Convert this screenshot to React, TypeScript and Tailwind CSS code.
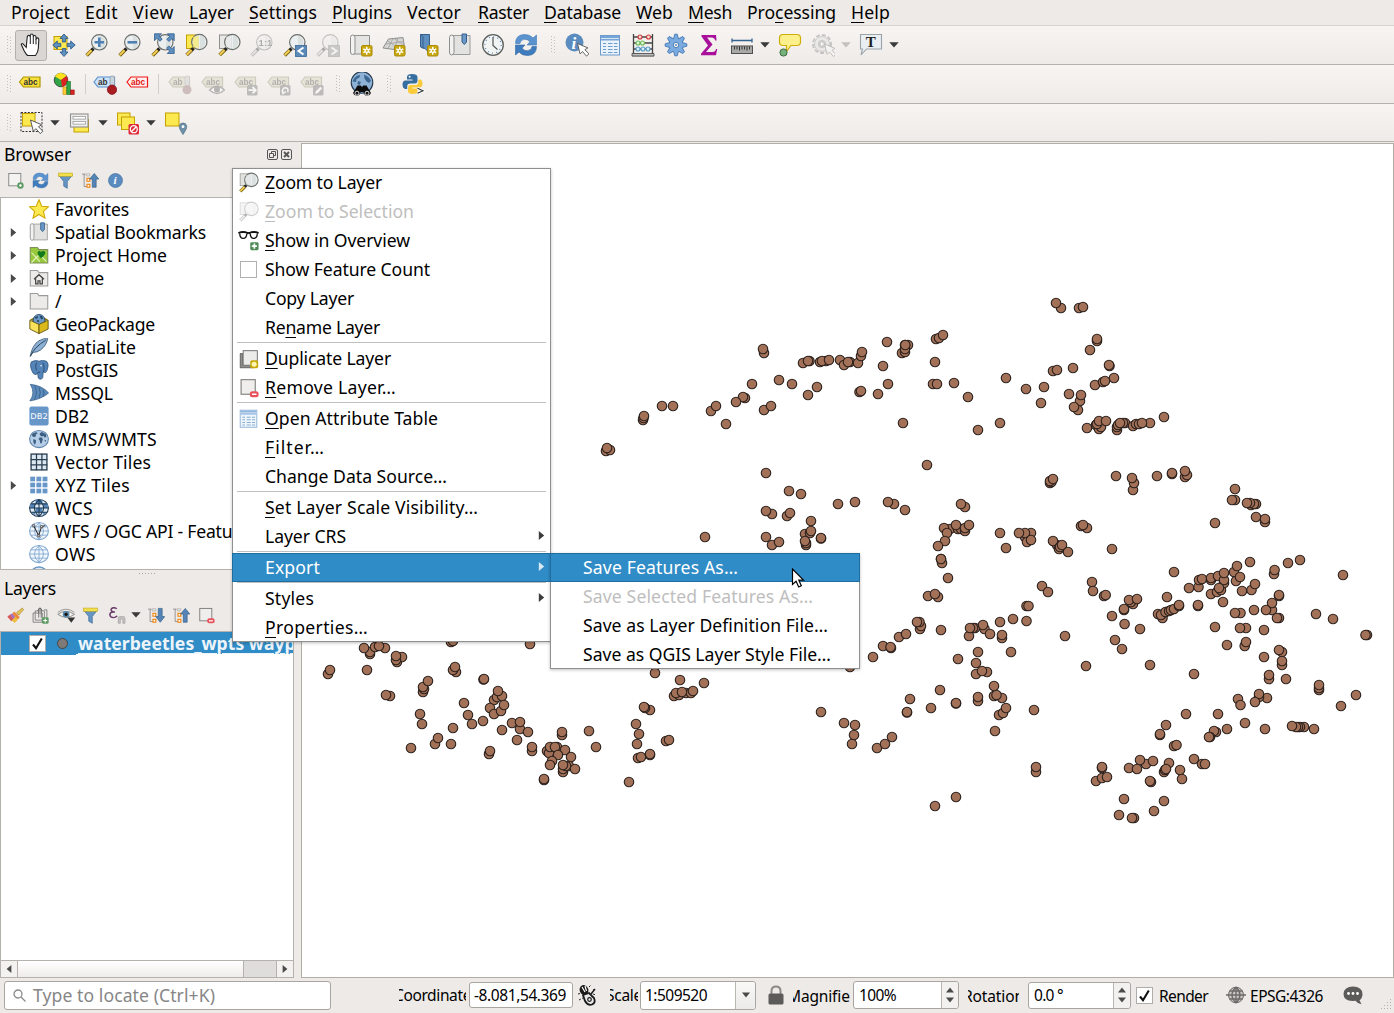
import React, { useLayoutEffect, useRef, useState } from "react";

/* ---------- text ---------- */

// Single line of text, tracked so that it fills exactly `w` pixels.
// An ampersand marks the mnemonic letter that follows it.
function Label({ text, w, className = "" }: { text: string; w: number; className?: string }) {
  const ref = useRef<HTMLSpanElement>(null);
  const [tracking, setTracking] = useState(0);
  const at = text.indexOf("&");
  const plain = text.replace("&", "");
  useLayoutEffect(() => {
    const el = ref.current;
    if (!el) return;
    el.style.letterSpacing = "0px";
    setTracking((w - el.getBoundingClientRect().width) / plain.length);
  }, [w, plain]);
  return (
    <span ref={ref} className={"inline-block shrink-0 whitespace-pre " + className} style={{ letterSpacing: `${tracking}px` }}>
      {at < 0 ? (
        plain
      ) : (
        <>
          {plain.slice(0, at)}
          <span className="underline decoration-1 underline-offset-[3px] [text-decoration-skip-ink:none]">{plain[at]}</span>
          {plain.slice(at + 1)}
        </>
      )}
    </span>
  );
}

/* ---------- icons ---------- */

type Kids = { children?: React.ReactNode };

const I = ({ children, s = 24, dim = false }: Kids & { s?: number; dim?: boolean }) => (
  <svg width={s} height={s} viewBox="0 0 24 24" fill="none" className={dim ? "shrink-0 opacity-35 grayscale" : "shrink-0"}>
    {children}
  </svg>
);

const Lens = () => (
  <>
    <path d="M8.5 15.5 L6.5 17.5" stroke="#222" strokeWidth="3.4" />
    <path d="M6.8 17.2 L1.6 22.4" stroke="#7a6312" strokeWidth="3.6" />
    <path d="M6.5 17.3 L1.7 22.1" stroke="#f3cf55" strokeWidth="2" />
    <circle cx="14.3" cy="9.3" r="7.7" fill="#e9eeee" fillOpacity=".85" stroke="#6c706c" strokeWidth="1.2" />
    <path d="M15 2.5 A7 7 0 0 1 15 16 Z" fill="#cfd5d3" fillOpacity=".6" />
  </>
);

const Star = ({ x = 12, y = 12 }: { x?: number; y?: number }) => (
  <g transform={`translate(${x} ${y})`}>
    <rect x=".5" y=".5" width="10.5" height="10.5" rx="1.5" fill="#c9a80e" stroke="#a98b08" />
    <path d="M5.75 1.8v7.9M2.3 3.8l6.9 3.9M9.2 3.8L2.3 7.7" stroke="#fff" strokeWidth="1.4" />
    <circle cx="5.75" cy="5.75" r="2.2" fill="#fff" />
    <circle cx="5.75" cy="5.75" r="1" fill="#c9a80e" />
  </g>
);

const Cursor = ({ t = "translate(0 0)" }: { t?: string }) => (
  <path transform={t} d="M0 0 L2.6 10.4 L5 8 L9 12.6 L11.4 10.4 L7.4 6.2 L10.4 4.4 Z" fill="#fff" stroke="#555" strokeWidth=".9" />
);

const Hand = () => (
  <I>
    <path d="M7.200 14.500 L4.300 11.200 Q2.700 9.800 2.300 11.500 Q3.500 14 5 17.500 Q6.500 20.500 8.500 22.500 H16.500 Q19 19.500 19.300 15.500 L19.800 6.500 Q19.700 4.900 18.500 4.900 T17 6.500 V4 Q16.900 2.500 15.700 2.500 T14.300 4 V2.700 Q14 1 12.700 1 T11.300 2.700 V4 Q11 2.400 9.800 2.400 T8.200 4 Z" fill="#fff" stroke="#222" strokeWidth="1.100" />
    <path d="M11.300 4V11M14.300 4V11M17 6V11.500" stroke="#222" strokeWidth="1" />
  </I>
);

const Pan = () => (
  <I>
    <rect x="2" y="3.5" width="13" height="13" fill="#fce94f" stroke="#c4a000" />
    <g fill="#5f8fbf" stroke="#2f5c8b" strokeWidth=".9">
      <path d="M12 1l4 4.500h-2.400v3.500h-3.200V5.500H8z" />
      <path d="M12 23.500l4-4.500h-2.400v-3.500h-3.200v3.500H8z" />
      <path d="M.8 12l4.500-4v2.400h3.500v3.200H5.300V16z" />
      <path d="M23.200 12l-4.500-4v2.400h-3.500v3.200h3.500V16z" />
    </g>
  </I>
);

const ZoomIn = () => (
  <I>
    <Lens />
    <path d="M14.300 4.500v9.600M9.500 9.300h9.600" stroke="#4f80b4" strokeWidth="2.600" />
  </I>
);
const ZoomOut = () => (
  <I>
    <Lens />
    <path d="M9.500 9.300h9.600" stroke="#4f80b4" strokeWidth="2.600" />
  </I>
);
const ZoomFull = () => (
  <I>
    <Lens />
    <g fill="#5f8fbf" stroke="#2f5c8b" strokeWidth=".8">
      <path d="M3.500.800h7L8.200 3l3 3L9 8.200l-3-3-2.500 2.500z" />
      <path d="M23.200.800v7L21 5.500l-3 3-2.200-2.200 3-3L16.300.800z" />
      <path d="M23.200 20.500h-7l2.400-2.400-3-3 2.200-2.200 3 3 2.400-2.400z" />
    </g>
  </I>
);
const ZoomSel = ({ fill = "#fce94f", stroke = "#c4a000", s = 24, dim = false }: { fill?: string; stroke?: string; s?: number; dim?: boolean }) => (
  <I s={s} dim={dim}>
    <rect x="2.500" y="2" width="12" height="13.500" fill={fill} stroke={stroke} />
    <g transform="translate(1 -.300)">
      <Lens />
    </g>
    <rect x="9" y="3.500" width="5.500" height="11" fill={fill} fillOpacity=".55" />
  </I>
);
const ZoomNative = () => (
  <I dim>
    <Lens />
    <text x="8.600" y="13" fontSize="9.500" fontWeight="bold" fill="#333" fontFamily="Liberation Sans">1:1</text>
  </I>
);
const ZoomStep = ({ next = false }: { next?: boolean }) => (
  <I dim={next}>
    <Lens />
    <rect x="12.500" y="12.500" width="11" height="11" fill="#5b8ab8" stroke="#3a6897" strokeWidth=".8" />
    <path d={next ? "M15.500 14.500l5 3.500-5 3.500" : "M20.500 14.500l-5 3.500 5 3.500"} stroke="#fff" strokeWidth="2" />
  </I>
);

const NewMap = () => (
  <I>
    <path d="M5 2.500h15.500v18.500H5z" fill="#e4e4e2" stroke="#8e8e8c" />
    <path d="M1.500 19V4.500Q1.500 2 3.700 2T6 4.500V19.500Q5.500 21.500 3.500 21.500T1.500 19z" fill="#f2f2f0" stroke="#8e8e8c" />
    <Star x={12} y={12} />
  </I>
);
const New3D = () => (
  <I>
    <path d="M6.500 6L21 4.500 22.500 14 16 17 1 15z" fill="#d5d5d3" stroke="#8e8e8c" />
    <path d="M11 5.500L6 15.500M16 5L12 16.500M4 11l18-2.500M12 5.500L22 12M6 8l11 8" stroke="#a0a09e" strokeWidth=".8" />
    <Star x={12} y={12} />
  </I>
);
const NewBookmark = () => (
  <I>
    <path d="M5.500 1.500h9V20l-4.500-4.500L5.500 14z" fill="#5f8fbf" stroke="#355f8c" />
    <path d="M5.500 1.500l2.500 2V16" stroke="#355f8c" />
    <Star x={12} y={12} />
  </I>
);
const Bookmarks = ({ s = 24 }: { s?: number }) => (
  <I s={s}>
    <path d="M5 2.500h17V21.500H5z" fill="#e2e2e0" stroke="#9a9a98" />
    <path d="M1.500 19V4.500Q1.500 2 3.700 2T6 4.500V19.500Q5.500 22 3.500 22T1.500 19z" fill="#f2f2f0" stroke="#8e8e8c" />
    <path d="M14 1h4.500v8l-2.200 2.500L14 9z" fill="#6a98c6" stroke="#345f8c" />
  </I>
);
const Clock = () => (
  <I>
    <circle cx="12" cy="12" r="10.300" fill="#f2f4f4" stroke="#5c5f5c" strokeWidth="1.300" />
    <circle cx="12" cy="12" r="8.200" stroke="#5f8fbf" strokeWidth="1.300" strokeDasharray="1 3.290" />
    <path d="M12 4v8.500l4.500 4" stroke="#555" strokeWidth="1.200" />
  </I>
);
const Refresh = ({ s = 24 }: { s?: number }) => (
  <I s={s}>
    <path d="M1.500 10.500Q1.500 2 10 1.500q6-.200 9 3.500l3.500-3v10H13l3-3.200Q13.500 6 10.500 6.300 6.500 6.500 6 10.500z" fill="#5b93cf" stroke="#3f78b4" strokeWidth=".6" />
    <path d="M22.500 13.500q0 8.500-8.500 9-6 .200-9-3.500l-3.500 3V12H11l-3 3.200q2.500 2.800 5.500 2.500 4-.200 4.500-4.200z" fill="#3f7cbe" stroke="#2f66a0" strokeWidth=".6" />
  </I>
);
const Info = ({ s = 24, cursor = false }: { s?: number; cursor?: boolean }) => (
  <I s={s}>
    {cursor ? (
      <>
        <circle cx="9.500" cy="9.500" r="9" fill="#5b8cc0" />
        <text x="6.600" y="15.500" fontSize="17" fontStyle="italic" fontWeight="bold" fill="#fff" fontFamily="Liberation Serif">i</text>
        <Cursor t="translate(12.500 10.500)" />
      </>
    ) : (
      <>
        <circle cx="12" cy="12" r="9.800" fill="#5b8cc0" stroke="#3f70a4" />
        <text x="9" y="17.500" fontSize="16" fontStyle="italic" fontWeight="bold" fill="#fff" fontFamily="Liberation Serif">i</text>
      </>
    )}
  </I>
);
const Table = ({ s = 24, dim = false }: { s?: number; dim?: boolean }) => (
  <I s={s}>
    <g opacity={dim ? 0.8 : 1}>
      <rect x="2.500" y="2.500" width="19" height="19.500" fill="#eaf3fb" stroke="#6d9bcb" />
      <rect x="3" y="3" width="18" height="4.500" fill="#76a5d8" />
      <path d="M3 5.500h18" stroke="#fff" strokeWidth=".7" />
      <path d="M5 10.500h3M10 10.500h4.500M16 10.500h3.500M5 13.500h3M10 13.500h4.500M16 13.500h3.500M5 16.500h3M10 16.500h4.500M16 16.500h3.500M5 19.500h3M10 19.500h4.500M16 19.500h3.500" stroke="#6d9bcb" strokeWidth="1.200" />
    </g>
  </I>
);
const Abacus = () => (
  <I>
    <path d="M2.500 1v21M21.500 1v21M1 22.500h22M2.500 4h19M2.500 10h19M2.500 16h19" stroke="#444" strokeWidth="1.300" />
    <path d="M1 20.500h22v2.500H1z" fill="#bbb" stroke="#444" strokeWidth=".8" />
    <g strokeWidth="1.100">
      <g fill="#fbdada" stroke="#cc3a3a"><circle cx="9" cy="4" r="2" /><circle cx="17.500" cy="4" r="2" /></g>
      <g fill="#dff5d8" stroke="#6dbb58"><circle cx="7" cy="10" r="2" /><circle cx="11.500" cy="10" r="2" /></g>
      <g fill="#d9eefb" stroke="#5a9cc8"><circle cx="7" cy="16" r="2" /><circle cx="12" cy="16" r="2" /><circle cx="17" cy="16" r="2" /></g>
    </g>
  </I>
);
const Gear = () => (
  <I>
    {[0, 45, 90, 135].map((a) => (
      <path key={a} d="M10.800 1.200h2.400l1.400 5v11.600l-1.400 5h-2.400l-1.400-5V6.200z" fill="#7aaade" stroke="#3f78b4" strokeWidth=".9" transform={`rotate(${a} 12 12)`} />
    ))}
    <circle cx="12" cy="12" r="6.600" fill="#7aaade" />
    <circle cx="12" cy="12" r="2.700" fill="#f3f0ee" stroke="#3f78b4" strokeWidth=".9" />
    <circle cx="12" cy="12" r=".9" fill="#4a80ba" />
  </I>
);
const Sigma = () => (
  <I>
    <path d="M4.500 2h14.500l.500 5.500h-1.300Q17.500 4.500 14.500 4.500H10l5.500 7-6.500 7.500h6.500q3 0 3.500-3h1.200L19 22.300H4v-1.500l7-8.300L4.500 3.500z" fill="#a8109c" />
  </I>
);
const Ruler = () => (
  <I>
    <path d="M2 7.500h20M2 5.500v4M22 5.500v4" stroke="#34638f" strokeWidth="1.300" />
    <rect x="1.500" y="13" width="21" height="7.500" fill="#a9a9a7" stroke="#505050" />
    <path d="M4.500 13.500v3M7 13.500v3M9.500 13.500v4M12 13.500v3M14.500 13.500v3M17 13.500v4M19.500 13.500v3" stroke="#333" />
  </I>
);
const MapTip = () => (
  <I>
    <path d="M5 1.500h14q3.500 0 3.500 3.500v4q0 3.500-3.500 3.500h-6l-4.500 6V12.500H5Q1.500 12.500 1.500 9V5Q1.500 1.500 5 1.500z" fill="#fbf08c" stroke="#d0ae0a" strokeWidth="1.200" />
    <circle cx="5.500" cy="19.500" r="3.600" fill="#76b07a" stroke="#3d6b41" />
  </I>
);
const Action = () => (
  <I dim>
    <circle cx="11" cy="11" r="9" stroke="#777" strokeWidth="2" strokeDasharray="4 2" />
    <circle cx="11" cy="11" r="7.500" fill="#ddd" stroke="#888" />
    <circle cx="11" cy="11" r="4" fill="#888" />
    <path d="M9.800 8.800v4.400l3.500-2.200z" fill="#fff" />
    <Cursor t="translate(13.500 11)" />
  </I>
);
const Annot = () => (
  <I>
    <path d="M1.500 1.500h21v14.500H7.500L2 22l1.500-6h-2z" fill="#e9eef2" stroke="#9aa3aa" strokeWidth="1.100" />
    <text x="6.800" y="13.500" fontSize="15" fill="#222" fontFamily="Liberation Serif" fontWeight="bold">T</text>
  </I>
);

const tagPath = "M1 7.500L5 2.500h16.500v10H5z";
const Tag = ({ fill, stroke, text, t = "abc" }: { fill: string; stroke: string; text: string; t?: string }) => (
  <>
    <path d={tagPath} fill={fill} stroke={stroke} strokeWidth="1.200" />
    <text x="5" y="10.300" fontSize="8.200" fontWeight="bold" fill={text} fontFamily="Liberation Sans">{t}</text>
  </>
);
const LabelIcon = () => (
  <I>
    <g transform="translate(.500 2.500)"><Tag fill="#f7e03a" stroke="#b09300" text="#333" /></g>
  </I>
);
const Diagram = () => (
  <I>
    <circle cx="9" cy="8" r="6.800" fill="#2fa548" stroke="#1c1c1c" strokeWidth=".7" />
    <path d="M9 8L3 4.500A6.800 6.800 0 0 1 14.500 4z" fill="#fce01e" />
    <path d="M9 8L14.500 4A6.800 6.800 0 0 1 10 14.700z" fill="#d22" />
    <rect x="11" y="15" width="3.600" height="7.500" fill="#fc3" stroke="#c80" strokeWidth=".6" />
    <rect x="14.800" y="9.500" width="3.600" height="13" fill="#2fa548" stroke="#176b2b" strokeWidth=".6" />
    <rect x="18.600" y="18" width="3.600" height="4.500" fill="#d22" stroke="#811" strokeWidth=".6" />
  </I>
);
const Pin = () => (
  <I>
    <g transform="translate(0 2.500)"><Tag fill="#cde4fa" stroke="#5590d0" text="#333" t="ab" /></g>
    <rect x="17" y="4" width="4.500" height="10" rx="2" fill="#c8d4de" stroke="#8b96a0" strokeWidth=".7" />
    <circle cx="19" cy="17.700" r="4.700" fill="#a81c22" stroke="#7c1016" strokeWidth=".7" />
  </I>
);
const RedTag = () => (
  <I>
    <g transform="translate(0 2.500)"><Tag fill="#fff0f0" stroke="#f01414" text="#e01414" /></g>
  </I>
);
const GreyTag = ({ kind }: { kind: number }) => (
  <I>
    <g opacity=".42">
      <g transform="translate(0 2.500)"><Tag fill="#d5d3b8" stroke="#9a9880" text="#555" t={kind === 0 ? "ab" : "abc"} /></g>
      {kind === 0 && (
        <>
          <rect x="17" y="4" width="4.500" height="10" rx="2" fill="#ccc" stroke="#999" strokeWidth=".7" />
          <circle cx="19" cy="17.700" r="4.500" fill="#9c7a7c" />
        </>
      )}
      {kind === 1 && (
        <>
          <path d="M8.500 18Q16 10.500 23.500 18 16 25 8.500 18z" fill="#fff" stroke="#666" strokeWidth="1.200" />
          <circle cx="16" cy="17.500" r="3" fill="#666" />
        </>
      )}
      {kind > 1 && <rect x="13" y="13" width="10.500" height="10.500" rx="1.500" fill="#777" />}
      {kind === 2 && <path d="M14.500 18.200h7M18.500 15l3.300 3.200-3.300 3.200" stroke="#fff" strokeWidth="1.800" />}
      {kind === 3 && <path d="M16 21q-1.500-5 2.500-5.200 3.500.500 2.200 4.500M15 18l1 3.500 3-2" stroke="#fff" strokeWidth="1.500" />}
      {kind === 4 && <path d="M15 22l1-3 4.500-4.300 1.600 1.600L18 21z" fill="#fff" />}
    </g>
  </I>
);
const Binoculars = () => (
  <I>
    <circle cx="12" cy="10.500" r="10.800" fill="#8db2d6" stroke="#24394f" strokeWidth="1.100" />
    <path d="M4 6.500q3-4 6-3.500l-.500 2.500-3 1.500-.500 3-3.500-.500zM14 2.800q5 1.500 7 6l-2 2.200-2.500-1.500-2-3zM8 9l3 1-1.500 3-2-1z" fill="#3d6690" />
    <path d="M7.500 13.500h3.200l1.300 1.500 1.300-1.500h3.200l4.500 7.500q-1 2.700-4 2.700T13.500 20h-3q-.5 3.700-3.500 3.700T3 21z" fill="#0c0c0c" />
    <circle cx="7" cy="21.200" r="2" stroke="#ddd" fill="#111" />
    <circle cx="17" cy="21.200" r="2" stroke="#ddd" fill="#111" />
  </I>
);
const Python = () => (
  <I>
    <path d="M11 2Q6 2 6 5v2.500h5.500v1H4Q1.500 9 1.500 12.500T4 17h2.200v-2.800q.200-2.700 3-2.700h5q2.300-.200 2.300-2.500V5Q16.300 2 11 2z" fill="#366f9f" />
    <circle cx="8.600" cy="4.700" r="1" fill="#fff" />
    <path d="M11.800 22q5 0 5-3v-2.500h-5.500v-1H19q2.500-.500 2.500-4T19 7.500h-1.800v2.700q-.200 2.800-3 2.800h-5Q7 13.300 7 15.500V19Q7 22 11.800 22z" fill="#f9cb3a" />
    <path d="M16.500 16.500l5.500 2.300-5.500 2.300" stroke="#fff" strokeWidth="3" />
    <path d="M16.500 16.300l5.500 2.500-5.500 2.500" stroke="#333" strokeWidth="1.100" />
  </I>
);

const SelectIcon = () => (
  <I>
    <rect x="1" y="1.500" width="21" height="19" stroke="#333" strokeWidth="1" strokeDasharray="2 1.400" />
    <rect x="2.500" y="2.500" width="12.500" height="12.500" fill="#fce94f" stroke="#c4a000" />
    <g transform="translate(10.500 9) scale(1.080)"><Cursor /></g>
  </I>
);
const SelectForm = () => (
  <I>
    <rect x="6" y="8.500" width="14.500" height="12.500" fill="#fce94f" stroke="#c4a000" />
    <rect x="2.500" y="3" width="17.500" height="13" fill="#eee" stroke="#8f8f8d" strokeWidth="1.100" />
    <rect x="5" y="5.500" width="12.500" height="2.600" fill="#fff" stroke="#999" strokeWidth=".8" />
    <rect x="5" y="10.500" width="12.500" height="2.600" fill="#fff" stroke="#999" strokeWidth=".8" />
  </I>
);
const Deselect = () => (
  <I>
    <rect x="1.500" y="2" width="12.500" height="12" fill="#fce94f" stroke="#c4a000" />
    <rect x="5.500" y="6" width="13" height="12.500" fill="#fce94f" stroke="#c4a000" />
    <rect x="12.500" y="13" width="10.500" height="10.500" rx="1.500" fill="#e02a38" />
    <circle cx="17.800" cy="18.200" r="3.500" stroke="#fff" strokeWidth="1.300" />
    <path d="M15.300 20.700l5-5" stroke="#fff" strokeWidth="1.300" />
  </I>
);
const SelectLoc = () => (
  <I>
    <rect x="1.500" y="2" width="13.500" height="13" fill="#fce94f" stroke="#c4a000" />
    <path d="M19 23.500Q15 17.500 15.300 15.500 15.500 12 19 12t3.700 3.500Q23 17.500 19 23.500z" fill="#6f92a8" stroke="#4d6d82" strokeWidth=".7" />
    <circle cx="19" cy="15.700" r="1.400" fill="#fff" />
  </I>
);

/* small panel icons */
const AddSq = ({ s = 17 }: { s?: number }) => (
  <I s={s}>
    <rect x="2.500" y="2" width="17" height="17.500" fill="#f4f3f1" stroke="#7c7c7a" strokeWidth="1.200" />
    <circle cx="19" cy="19" r="4.500" fill="#5c9a64" />
    <circle cx="19" cy="19" r="1.700" fill="#fff" />
  </I>
);
const RemoveSq = ({ s = 17 }: { s?: number }) => (
  <I s={s}>
    <rect x="2.500" y="2" width="17" height="17.500" fill="#efeeec" stroke="#7c7c7a" strokeWidth="1.300" />
    <rect x="13" y="16" width="10.500" height="7" rx="3" fill="#e8505a" />
    <path d="M15.500 19.500h5.500" stroke="#fff" strokeWidth="1.800" />
  </I>
);
const Funnel = () => (
  <I s={17}>
    <path d="M2.500 4.500h19l-7 9V23l-5-3v-6.500z" fill="#6695c4" stroke="#3e6c9b" />
    <rect x="2" y="1.500" width="20" height="4.500" fill="#f3e04c" stroke="#c0a41a" strokeWidth=".8" />
  </I>
);
const TreeArrow = ({ down = false }: { down?: boolean }) => (
  <I s={17}>
    <path d="M0 3h5M3 3v17.500M3 20.500h4" stroke="#888" strokeWidth="1.200" />
    <path d="M6 2.500h5v3H6z" stroke="#aaa" />
    <rect x="7" y="9" width="4" height="4" fill="#fff" stroke="#f08a1c" strokeWidth="1.700" />
    <rect x="7" y="17.500" width="4" height="4" fill="#fff" stroke="#f08a1c" strokeWidth="1.700" />
    <path d={down ? "M14.500 2h5.500v11.500h3.700L17.300 21.500l-6.500-8h3.700z" : "M14.500 21.500h5.500V10h3.700L17.300 2l-6.500 8h3.700z"} fill="#5585b8" stroke="#31597f" strokeWidth=".9" />
  </I>
);
const Brush = () => (
  <I s={17}>
    <path d="M23.500 3.500L21.500 1.500 13.500 8l3 3.500z" fill="#e9c75a" stroke="#a5822a" />
    <path d="M10.500 6.500l7.500 8-3 3-8-7.500z" fill="#e88a3c" />
    <path d="M7 9.500l8.500 8L11 22.500 1 14z" fill="#f0bd3e" />
    <path d="M.500 13.500l4-3 4.500 6-3 3.500z" fill="#d65a5a" />
    <path d="M4 11l3.500-2 4 5-2.500 3z" fill="#a870c0" />
  </I>
);
const AddGroup = () => (
  <I s={17}>
    <path d="M1.500 8.500h13v13h-13zM4.500 5.500h13v13h-13z" fill="#eceae8" stroke="#6f6f6d" strokeWidth="1.100" />
    <path d="M9.500 15V2.500h3.500V15M8 5.500L11.200 1l3.300 4.500" stroke="#555" strokeWidth="1.100" />
    <path d="M17 4h4v11" stroke="#6f6f6d" strokeWidth="1.100" />
    <rect x="14" y="14.500" width="9.500" height="9" rx="2" fill="#5c9a64" />
    <path d="M16 19h5.500M18.700 16.300v5.500" stroke="#fff" strokeWidth="1.500" />
  </I>
);
const Eye = () => (
  <I s={19}>
    <path d="M1 10.500Q11 3 22 10.500 12 18 1 10.500z" fill="#f4f4f2" stroke="#888" strokeWidth="1.200" />
    <path d="M1 8Q11 0 22 8" stroke="#999" strokeWidth="1.200" />
    <circle cx="11.500" cy="10.500" r="4.200" fill="#5a86a8" />
    <circle cx="11.500" cy="10.500" r="2" fill="#111" />
    <path d="M13 14.500h10l-5 6.500z" fill="#333" />
  </I>
);
const Epsilon = () => (
  <I s={17}>
    <path d="M11 2.500Q9 .800 6.500 1 3 1.500 3 4t4 3.200h1.500H6Q1 7.500 1.200 11t5 4q3.500 0 5.300-2.500" stroke="#6d3f6d" strokeWidth="2.100" />
    <path d="M13 23v-7q0-2.500 2.500-2.500H21q1.500.500 1.500 2.500v7h-3v-6H16v6z" fill="#c5c3c1" stroke="#999" strokeWidth=".8" />
  </I>
);

/* browser tree icons */
const Fav = () => (
  <I s={20}>
    <path d="M12 .800l3.300 7.800 8.200.700-6.200 5.500 1.900 8.200L12 18.600l-7.200 4.400 1.900-8.200L.500 9.300l8.200-.700z" fill="#fce94f" stroke="#d0a808" strokeWidth="1.300" />
  </I>
);
const folder = "M1.500 21.500V3h8.500l2 2.500h10.500v16z";
const Folder = ({ children }: Kids) => (
  <I s={20}>
    <path d={folder} fill="#ecebe9" stroke="#9b9b99" strokeWidth="1.300" />
    {children}
  </I>
);
const HomeGlyph = () => <path d="M6 13.500l6-5.500 6 5.500M8 12.500v6.500h2.800v-3.500h2.400V19H16v-6.500" stroke="#444" strokeWidth="1.500" />;
const ProjFolder = () => (
  <I s={20}>
    <path d={folder} fill="#98c93c" stroke="#7d8f5a" strokeWidth="1.300" />
    <path d="M3 21L12 12M3 9l10 11M15 14l6 6" stroke="#e6f3c0" strokeWidth="1.300" />
    <path d="M14.500 16Q9.500 12 10.500 8.500q2-2.500 4 0 2.500-2.500 5 0Q20 12 14.500 16z" fill="#137a1c" />
  </I>
);
const GeoPkg = () => (
  <I s={20}>
    <path d="M1 6.500L12 1.500 23 6.500 12 12z" fill="#8a7310" />
    <circle cx="12" cy="7.500" r="7" fill="#6c98c4" stroke="#27486b" />
    <path d="M6.500 4.500l3.500-2 1 1.500-2 2zM12.500 2l3 .500 1.500 3-2 1-1.500-2zM10 7l2.500 1-1 2-2-1z" fill="#27486b" />
    <path d="M1 7.500l11 5V23.500L1 18z" fill="#f7e25a" stroke="#5b4c08" />
    <path d="M23 7.500l-11 5V23.500L23 18z" fill="#d9b91c" stroke="#5b4c08" />
  </I>
);
const Feather = () => (
  <I s={20}>
    <path d="M1.500 23Q4 9 12 4.500 18 1 22.500 2 21 10 14 15.500q-4 3-9 3z" fill="#8db0d3" stroke="#33526f" strokeWidth=".9" />
    <path d="M1.500 23.500Q6 12 20 4" stroke="#2a455f" strokeWidth="1.200" />
  </I>
);
const Elephant = () => (
  <I s={20}>
    <path d="M3 2Q9-.500 12 1.500 16-.500 21 1.500q3 3 1.500 8-1 4-2.500 5.500l-3-.500-.500 6.500q-1 2.500-3.500 2t-2.200-4l-.500-4-1.500 2.500Q5 18 3.500 13 .500 6 3 2z" fill="#5585b8" stroke="#31597f" />
    <path d="M9 3q-2 4 0 9.500M16.500 3.500q3 4 .500 11M10.500 15l3-.500" stroke="#27486b" strokeWidth="1.100" />
    <circle cx="14.500" cy="7" r=".9" fill="#fff" />
  </I>
);
const Mssql = () => (
  <I s={20}>
    <path d="M1.500 1.500Q16 3 23.500 12 15 19.500 1 21.500 8 12 1.500 1.500z" fill="#5b8bbd" stroke="#33577d" strokeWidth=".8" />
    <path d="M7 3.500q4 8-.500 16.500M12 5q3 7 0 13M17 8q2 4.500 0 8" stroke="#33577d" strokeWidth=".9" />
  </I>
);
const Db2 = () => (
  <I s={20}>
    <rect x=".5" y=".5" width="23" height="23" rx="2.500" fill="#6796c8" />
    <text x="1.500" y="15.500" fontSize="9.500" textLength="21" lengthAdjust="spacingAndGlyphs" fill="#fff" fontFamily="DejaVu Sans">DB2</text>
  </I>
);
const Globe = ({ kind }: { kind: "wms" | "wcs" | "wfs" | "ows" }) => (
  <I s={20}>
    <ellipse cx="12" cy="12" rx="11.300" ry="10.300" fill={kind === "wms" ? "#b5cde6" : kind === "wcs" ? "#dfeaf4" : "#f2f7fc"} stroke={kind === "wcs" ? "#1f3a55" : kind === "wms" ? "#6085aa" : "#7ea6d0"} strokeWidth="1.300" />
    {kind === "wms" && <path d="M3 7q3-3.500 6-3l1.500 1.500-2.500 1 .5 2-2.500 1.500L4.500 9zM5.500 12l3 1.500-.5 3.500-1.500 2-1.500-4zM13 5l2.500-1.500L20 6l1 3-2 1.500-1.500-2-2 .5-2.500-1.500zM13 10l3 .5.5 2.500-1.500 4.500-1.500-.5-.5-3-1.500-2zM18.500 13l2 .5-1 2.500z" fill="#3d5f82" />}
    {kind === "wcs" && <path d="M2 7h5v5H1zM8 2h8v5H8zM17 7h5l1 5h-5zM8 12h8v5H8zM3 17h4l1 4zM17 17h4l-4 4z" fill="#5585b8" />}
    {kind !== "wms" && <path d="M1 12h22M3 7h18M3 17h18M12 2v20M12 2Q1 12 12 22M12 2Q23 12 12 22" stroke={kind === "wcs" ? "#1f3a55" : "#7ea6d0"} strokeWidth={kind === "wcs" ? "1.300" : "1"} />}
    {kind === "wfs" && <path d="M5.500 5.500l6 12L15 7l4.500-1.500" stroke="#333" strokeWidth="1.300" />}
    {kind === "wfs" && <path d="M4.500 4.500h2.500V7H4.500zM10.500 16.500h2.500V19h-2.500zM14 5.500h2.500V8H14z" fill="#fff" stroke="#333" strokeWidth=".9" />}
  </I>
);
const VTiles = () => (
  <I s={20}>
    <rect x="2.500" y="2.500" width="19" height="19" fill="#dce8f2" stroke="#2a3e50" strokeWidth="1.600" />
    <path d="M9 2v20M15.500 2v20M2 9h20M2 15.500h20" stroke="#2a3e50" strokeWidth="1.500" />
  </I>
);
const XTiles = () => (
  <I s={20}>
    {[2, 9.200, 16.400].map((y) => [1.500, 8.900, 16.300].map((x) => <rect key={`${x}-${y}`} x={x} y={y} width="5.800" height="5.600" fill="#6796c8" />))}
  </I>
);

/* context-menu icons */
const Glasses = () => (
  <I s={21}>
    <path d="M.500 3.500Q6 1 11 3.500q1-.500 2 0Q18 1 23.500 3.500" stroke="#111" strokeWidth="2.200" />
    <path d="M2 4q0 5.500 4 5.500T10 4M14 4q0 5.500 4 5.500T22 4" fill="#fff" stroke="#111" strokeWidth="1.500" />
    <rect x="14" y="14" width="9.500" height="9" rx="1.500" fill="#4e8a56" />
    <path d="M18.700 15.500v6M15.700 18.500h6" stroke="#fff" strokeWidth="2" />
  </I>
);
const Duplicate = () => (
  <I s={20}>
    <path d="M1.500 5.500h3v14h13v3h-16z" fill="#8f8f8d" stroke="#555" />
    <rect x="5" y="2" width="17" height="17.500" fill="#ececea" stroke="#777" strokeWidth="1.200" />
    <rect x="13.500" y="13.500" width="9.500" height="9.500" rx="2" fill="#c9a80e" />
    <circle cx="18.200" cy="18.200" r="3" fill="#fff6b0" />
  </I>
);

const DropArrow = ({ dim = false }: { dim?: boolean }) => (
  <span className="flex w-[15px] shrink-0 justify-start pl-[1.5px]">
    <svg width="10" height="6" viewBox="0 0 10 6"><path d="M.3.300h9.400L5 5.600z" fill={dim ? "#c3c0bd" : "#3a3a3a"} /></svg>
  </span>
);
const Tri = ({ dir, fill = "#4a4a4a", size = 8 }: { dir: "r" | "l" | "u" | "d"; fill?: string; size?: number }) => (
  <svg width={size} height={size} viewBox="0 0 10 10" className="shrink-0">
    <path d={{ r: "M2 0v10l6-5z", l: "M8 0v10L2 5z", u: "M0 8h10L5 2z", d: "M0 2h10L5 8z" }[dir]} fill={fill} />
  </svg>
);
const Grip = ({ className = "" }: { className?: string }) => (
  <span className={"flex shrink-0 justify-center " + className}>
    <svg width="5" height="18" viewBox="0 0 5 18">
      {[0, 3, 6, 9, 12, 15].map((y) => (
        <g key={y} fill="#c2beba"><rect x="0" y={y} width="1" height="1" /><rect x="3" y={y + 1} width="1" height="1" /></g>
      ))}
    </svg>
  </span>
);
const Cell = ({ children, active = false }: Kids & { active?: boolean }) => (
  <span className="flex w-[33px] shrink-0 items-center justify-center">
    {active ? (
      <span className="flex h-[31px] w-8 items-center justify-center rounded-[3px] border border-[#b3afab] bg-[#d9d6d3]">{children}</span>
    ) : (
      children
    )}
  </span>
);
const VSep = () => <span className="flex w-[9px] shrink-0 justify-center"><span className="h-5 w-px bg-[#d2cfcb]" /></span>;

const Bar = ({ children, className }: Kids & { className: string }) => (
  <div className={"flex shrink-0 items-center border-b border-[#b5b1ad] bg-gradient-to-b from-[#f7f4f1] to-[#eeebe8] pl-[5px] " + className}>{children}</div>
);

/* ---------- data ---------- */

const menus: [string, number, string][] = [
  ["Pro&ject", 59, "w-[74px]"], ["&Edit", 33, "w-[48px]"], ["&View", 41, "w-[56px]"], ["&Layer", 45, "w-[60px]"],
  ["&Settings", 68, "w-[83px]"], ["&Plugins", 60, "w-[75px]"], ["Vect&or", 54, "w-[71px]"], ["&Raster", 51, "w-[66px]"],
  ["&Database", 77, "w-[92px]"], ["&Web", 37, "w-[52px]"], ["&Mesh", 44, "w-[59px]"], ["Pro&cessing", 89, "w-[104px]"], ["&Help", 39, "w-[60px]"],
];

const tree: [React.ReactNode, string, number, boolean][] = [
  [<Fav />, "Favorites", 74, false],
  [<Bookmarks s={20} />, "Spatial Bookmarks", 151, true],
  [<ProjFolder />, "Project Home", 112, true],
  [<Folder><HomeGlyph /></Folder>, "Home", 49, true],
  [<Folder />, "/", 8, true],
  [<GeoPkg />, "GeoPackage", 100, false],
  [<Feather />, "SpatiaLite", 81, false],
  [<Elephant />, "PostGIS", 63, false],
  [<Mssql />, "MSSQL", 58, false],
  [<Db2 />, "DB2", 34, false],
  [<Globe kind="wms" />, "WMS/WMTS", 102, false],
  [<VTiles />, "Vector Tiles", 96, false],
  [<XTiles />, "XYZ Tiles", 75, true],
  [<Globe kind="wcs" />, "WCS", 38, false],
  [<Globe kind="wfs" />, "WFS / OGC API - Features", 202, false],
  [<Globe kind="ows" />, "OWS", 41, false],
];

type Item = { t: string; w: number; icon?: React.ReactNode; sub?: boolean; off?: boolean; on?: boolean };
const contextMenu: (Item | null)[] = [
  { t: "&Zoom to Layer", w: 117, icon: <ZoomSel s={21} fill="#e2e2e0" stroke="#a5a5a3" /> },
  { t: "&Zoom to Selection", w: 149, icon: <ZoomSel s={21} dim />, off: true },
  { t: "&Show in Overview", w: 145, icon: <Glasses /> },
  { t: "Show Feature Count", w: 165, icon: <span className="size-[17px] border border-[#b0b0b0] bg-white" /> },
  { t: "Copy Layer", w: 89 },
  { t: "Re&name Layer", w: 115 },
  null,
  { t: "&Duplicate Layer", w: 126, icon: <Duplicate /> },
  { t: "&Remove Layer…", w: 131, icon: <RemoveSq s={20} /> },
  null,
  { t: "&Open Attribute Table", w: 173, icon: <Table s={21} dim /> },
  { t: "&Filter…", w: 60 },
  { t: "Change Data Source…", w: 182 },
  null,
  { t: "&Set Layer Scale Visibility…", w: 213 },
  { t: "Layer CRS", w: 81, sub: true },
  null,
  { t: "Export", w: 55, sub: true, on: true },
  null,
  { t: "Styles", w: 49, sub: true },
  { t: "&Properties…", w: 103 },
];
const subMenu: Item[] = [
  { t: "Save Features As…", w: 155, on: true },
  { t: "Save Selected Features As…", w: 230, off: true },
  { t: "Save as Layer Definition File…", w: 245 },
  { t: "Save as QGIS Layer Style File…", w: 248 },
];

// Waypoint positions in window coordinates, as x,y pairs.
const points = `
764,353 763,349 803,363 809.5,361 808,361 820,362 826,361 822,361 829,360 840,360 844,365 850,362 848,362 858,363 861,356 862,352 887,342 883,366
908,345 905,345 902,353 905,352 905,349 905.3,345 936,339 939,338 943,335 935,362 933,384 937,384 954,383 968,397 903,423 978,430 888,384 878,394 859.5,392 861,391
779,380 792,384 752,384 817,387 808,395 745,398 743,397 736,402 764,410 771,406 711,411 716,406 726,424 662,406 673,406 643,420 643.5,418 644,416
606,451 610,450 607,448 766,473 927,465 789,491 801,494 838,504 855,502 894,504 888,502 905,510 772,514 766,511 787,516 790,513
811,521 805,534 810,533 811,531 806,545 806,543 805,541 821,538.5 821,538 766,537 772,545 779,542 705,537 965,507 961,504
950,529 944,528 958,529 961,529 956,525 965,531 965,528 969,525 947,533 945,541 938,546 941,559
1061,308 1056,303 1079,308 1083,307 1097,341 1097,339 1090,350 1006,378 1053,371 1057,370 1073,368 1109.5,366 1109,365 1026,389 1044,387 1041,403
1095,385 1103,382 1105,381 1114,378 1069,394 1080,401 1081,395 1078,410 1074,407 1000,423 1087,428 1096,425 1099,429 1101,427 1097,424 1099,421 1106,421
1117,430 1117,427 1118,425 1125,423 1123,423 1120,423 1133,426 1136,424 1150,423 1139,424 1142,423 1164,417 1050,483 1051.5,482 1050,481 1053,479
1116,476 1133,490 1134,483 1132,478 1157,476 1172,474 1172,473 1185,477 1187,475 1185,471 1235,489 1235,500 1232,500 1251,505 1256,504 1254,504 1250,503 1247,503
1256,517 1265,522 1265,519 1215,523 1000,533 1031,533 1025,537 1025,533 1019,533 1027,542 1031,540 1006,548 1087,528 1081,526 1083,525
1057,545 1053,541 1059,549 1060,547 1062,545 1068,552 1112,549
370,654 370,652 364,648 375,647 385,648 379,646 397,662 402,657 396,660 396,656 367,670 328,674 330,670 390,696 386,695 423,692 424,689 423,687 428,681
420,714 422,724 435,744 438,738 411,748 451,744 453,728 456,672 453,670 455,667 451,642 453,641 530,644 483.5,679.5 484,679 464,703 468,715 472,724 483,721
494,700 497,697 502,696 498,691 490,708 494,714 501,711 504,705 502,730 512,723 520,729 520,722 528,732 517,740 489,754 490,751 532,751 532,747
562,735 562,732 589,731 596,747 547,751 549,753 550,747 557,747 555,747 565,750 558,755 552,761 550,765 571,757 563,772 563,769 569,766 566,766 563,765 575,769 544,780 544,779
629,782 655,673 680,680 704,683 674,696 679,695 676,693 686,693 691,693 682,692 693,691 650,710 645,708 644,707 636,724 639,734 637,744 666,741 669,740 638,758 641,757 650,755 650,754
942,563 941,559 948,578 928,596 938,597 935,594 920,629 921,626 919.5,622 917,622 941,630 899,637 906,634 883,646 891,648 890.5,647 873,657 850,667
1042,586 1048,592 1026.5,606 1028.5,606 1013,619 1026.5,621 1000,622 969,636 975,628 973,628 970,628 984.5,629 983,625 990,634 1002,638 1002,635
978,652 1011,652 958,659 976,663 976,674 987,672 982,671 994,686 1002,698 994,696 996.5,695 999,715 1003,713 1006,708 1034,710 995,731 940,690 978,701 978,697
956,703.5 956,703 931,708 910,699 907,712.5 907,712 821,712 844,723 855,725 854,735 852,744 877,748 885,744 892,737 1065,636 1086,666 1036,772 1036,767 956,797 935,806
1174,572 1092,582 1093,591 1104,596 1105.7,595 1112,616 1115,640 1122,649 1124.6,624 1140,629 1124,610 1124,609 1133,604 1131,602 1129,600 1137,599
1167,597 1162.5,618 1158,614 1161,615 1165.5,612 1169,611 1171,610 1174,609 1179,606 1179,605 1189,588 1198.5,587 1199,580 1202,579 1211,580 1211,578 1218,576
1211,594 1217,592 1221,590 1224,583 1224,580 1224,573 1219,588 1234,572 1237,566 1236,581 1240,577 1250,562 1274,574 1274.6,570 1288,563 1300,560 1343,575
1242,591 1251.5,590 1255,584 1223,602 1198,606 1198,605 1279,596 1279,595 1272,610 1272,603 1266,610 1254,610 1240.5,613 1235,613 1279,618 1277,618
1215,627 1246,628 1240,628 1264,630 1227,645 1244.7,646 1246,642 1282,652 1279,650 1282,665 1282,661 1264,657 1269,679 1269,675 1286,679 1150,665 1194,674
1316,614 1333,619 1367,635 1365.5,635 1319,690 1319,688 1319,685 1356,695 1341,706 1267,698 1259,697 1259,694 1255,702 1238,699 1240.5,705
1186,714 1218,714 1245,723 1227,729 1265,729 1216,732 1214,731 1210,737 1209,737 1304,727 1300,727 1298,727 1296,727 1292,726 1314,729 1166,725 1160,735 1160,734 1174,746 1176.5,745
1146,764 1140,760 1153,761 1129,768 1137,769 1102,768 1102,767 1096,781 1102,778 1107,777 1169,763 1164,772 1165,770 1166,769 1151,782 1150,781 1180,770 1182,779
1194,759 1202,764 1205,764 1124,799 1164,801 1154,811 1119,815 1134,818 1132,818
`.trim().split(/\s+/).map((p) => p.split(",").map(Number));

/* ---------- pieces ---------- */

const MenuRow = ({ item }: { item: Item }) => (
  <div
    className={
      "flex h-[29px] items-center " +
      (item.on ? "bg-[#308cc6] text-white shadow-[inset_0_0_0_1px_#1f6c9f]" : item.off ? "text-[#bebebe]" : "text-black")
    }
  >
    <span className="flex w-[33px] shrink-0 items-center justify-center">{item.icon}</span>
    <Label text={item.t} w={item.w} className="leading-[27px]" />
    <span className="flex-1" />
    {item.sub && <span className="mb-[2px] mr-[5px] flex"><Tri dir="r" size={9} fill={item.on ? "#d5e8f3" : "#3c3c3c"} /></span>}
  </div>
);

const Spin = ({ text, w, className }: { text: string; w: number; className: string }) => (
  <div className={"flex shrink-0 rounded-[3px] border border-[#a9a5a1] bg-white " + className}>
    <span className="flex flex-1 items-center pl-[5px] pt-[2px]"><Label text={text} w={w} /></span>
    <span className="flex w-[17px] flex-col items-center justify-around rounded-r-[3px] border-l border-[#b9b5b1] bg-[#f3f1ef] py-[3px]">
      <Tri dir="u" /><Tri dir="d" />
    </span>
  </div>
);

const Check = () => (
  <span className="flex size-[17px] shrink-0 items-center justify-center border border-[#b0acaa] bg-white">
    <svg width="13" height="13" viewBox="0 0 13 13"><path d="M2 7.500l3 3.700L10.800 1.500" fill="none" stroke="#111" strokeWidth="2.100" /></svg>
  </span>
);

const Clipped = ({ text, w, className }: { text: string; w: number; className: string }) => (
  <span className={"flex shrink-0 justify-center overflow-hidden " + className}><Label text={text} w={w} /></span>
);

/* ---------- page ---------- */

export default function App() {
  return (
    <div className="relative flex h-[1013px] w-[1394px] flex-col overflow-hidden bg-[#edeae7] font-['Noto_Sans',sans-serif] text-[17.6px] text-black">
      <div className="flex h-[26px] shrink-0 items-start border-b border-[#d5d2cf] pl-[11px]">
        {menus.map(([t, w, c]) => (
          <span key={t} className={"flex shrink-0 leading-[24px] " + c}><Label text={t} w={w} /></span>
        ))}
      </div>

      <Bar className="h-[39px]">
        <Grip className="w-[9px] pr-px" />
        <Cell active><Hand /></Cell>
        <Cell><Pan /></Cell>
        <Cell><ZoomIn /></Cell>
        <Cell><ZoomOut /></Cell>
        <Cell><ZoomFull /></Cell>
        <Cell><ZoomSel /></Cell>
        <Cell><ZoomSel fill="#e8e8e6" stroke="#8e8e8c" /></Cell>
        <Cell><ZoomNative /></Cell>
        <Cell><ZoomStep /></Cell>
        <Cell><ZoomStep next /></Cell>
        <Cell><NewMap /></Cell>
        <Cell><New3D /></Cell>
        <Cell><NewBookmark /></Cell>
        <Cell><Bookmarks /></Cell>
        <Cell><Clock /></Cell>
        <Cell><Refresh /></Cell>
        <Grip className="w-[18px] pl-1" />
        <Cell><Info cursor /></Cell>
        <Cell><Table /></Cell>
        <Cell><Abacus /></Cell>
        <Cell><Gear /></Cell>
        <Cell><Sigma /></Cell>
        <Cell><Ruler /></Cell>
        <DropArrow />
        <Cell><MapTip /></Cell>
        <Cell><Action /></Cell>
        <DropArrow dim />
        <Cell><Annot /></Cell>
        <DropArrow />
      </Bar>

      <Bar className="h-[39px]">
        <Grip className="w-[8px]" />
        <Cell><LabelIcon /></Cell>
        <Cell><span className="ml-[2px]"><Diagram /></span></Cell>
        <span className="w-[2px] shrink-0" />
        <VSep />
        <span className="-ml-[2px] flex"><Cell><Pin /></Cell></span>
        <Cell><RedTag /></Cell>
        <VSep />
        {[0, 1, 2, 3, 4].map((k) => <Cell key={k}><GreyTag kind={k} /></Cell>)}
        <Grip className="w-[17px] pl-1" />
        <Cell><Binoculars /></Cell>
        <Grip className="w-[18px] pl-1" />
        <Cell><Python /></Cell>
      </Bar>

      <Bar className="h-[38px]">
        <Grip className="w-[10px] pr-[2px]" />
        <Cell><SelectIcon /></Cell>
        <DropArrow />
        <Cell><SelectForm /></Cell>
        <DropArrow />
        <Cell><Deselect /></Cell>
        <DropArrow />
        <Cell><SelectLoc /></Cell>
      </Bar>

      <div className="flex h-[836px] shrink-0">
        <div className="flex w-[294px] shrink-0 flex-col">
          <div className="flex h-[25px] shrink-0 items-center justify-between pl-1 pr-[2px]">
            <Label text="Browser" w={67} className="leading-[25px]" />
            <span className="flex gap-[3px]">
              <svg width="11" height="11" viewBox="0 0 11 11" fill="none" stroke="#555"><rect x=".5" y=".5" width="10" height="10" rx="1.500" /><path d="M4.500 4.500v-2h4v4h-2M2.500 4.500h4v4h-4z" /></svg>
              <svg width="11" height="11" viewBox="0 0 11 11" fill="none" stroke="#555"><rect x=".5" y=".5" width="10" height="10" rx="1.500" /><path d="M3 3l5 5M8 3L3 8" strokeWidth="1.800" /></svg>
            </span>
          </div>
          <div className="flex h-[30px] shrink-0 items-center gap-2 pb-[3px] pl-[7px]">
            <AddSq /><Refresh s={17} /><Funnel /><TreeArrow /><Info s={17} />
          </div>
          <div className="flex h-[373px] shrink-0 flex-col overflow-hidden border border-[#b5b1ad] bg-white">
            {tree.map(([icon, t, w, open]) => (
              <div key={t} className="flex h-[23px] shrink-0 items-center pb-px pl-[8px]">
                <span className="flex w-[20px]">{open && <Tri dir="r" size={9} />}</span>
                {icon}
                <Label text={t} w={w} className="mb-px ml-[6px] leading-[22px]" />
              </div>
            ))}
            <svg width="20" height="20" viewBox="0 0 20 20" className="ml-[28px] shrink-0"><circle cx="10" cy="10" r="9" fill="#dbe8f4" stroke="#6796c8" strokeWidth="1.500" /></svg>
          </div>
          <div className="flex h-[7px] shrink-0 items-center justify-center gap-[2px]">
            {[0, 1, 2, 3, 4, 5].map((k) => <span key={k} className="size-px bg-[#aaa6a2]" />)}
          </div>
          <div className="flex h-[23px] shrink-0 items-center pl-1"><Label text="Layers" w={52} className="mb-px leading-[22px]" /></div>
          <div className="flex h-[31px] shrink-0 items-center pb-px pl-[7px]">
            <span className="flex w-[25px]"><Brush /></span>
            <span className="flex w-[25px]"><AddGroup /></span>
            <span className="flex w-[25px]"><Eye /></span>
            <span className="flex w-[27px]"><Funnel /></span>
            <span className="flex w-[17px]"><Epsilon /></span>
            <span className="flex w-[22px] pl-[3px]"><DropArrow /></span>
            <span className="flex w-[25px]"><TreeArrow down /></span>
            <span className="flex w-[25px]"><TreeArrow /></span>
            <RemoveSq />
          </div>
          <div className="flex flex-1 flex-col overflow-hidden border border-[#b5b1ad] bg-white">
            <div className="flex h-[23px] shrink-0 items-center overflow-hidden bg-[#308cc6] pl-[28px]">
              <Check />
              <span className="ml-[11px] size-[11px] shrink-0 rounded-full border border-[#444] bg-[#7f7a78]" />
              <Label text="waterbeetles_wpts waypoints" w={264} className="ml-[8px] h-[23px] border-b border-white pl-[2px] font-bold leading-[22px] text-[#eef5fa] underline decoration-1 underline-offset-[3px]" />
            </div>
            <div className="flex-1" />
            <div className="flex h-[17px] shrink-0 border-t border-[#b5b1ad] bg-[#dfdddb]">
              <span className="flex w-[17px] items-center justify-center border-r border-[#b5b1ad] bg-[#f4f2f0]"><Tri dir="l" /></span>
              <span className="w-[226px] border-r border-[#b5b1ad] bg-gradient-to-b from-white to-[#efedeb]" />
              <span className="flex-1" />
              <span className="flex w-[17px] items-center justify-center border-l border-[#b5b1ad] bg-[#f4f2f0]"><Tri dir="r" /></span>
            </div>
          </div>
        </div>

        <div className="ml-[7px] mt-px flex flex-1 border border-[#b1aea6] bg-white">
          <svg width="1091" height="833" viewBox="302 144 1091 833">
            {points.map(([x, y], i) => <circle key={i} cx={x} cy={y} r="4.750" fill="#a37158" stroke="#2b211d" strokeWidth="1.100" />)}
          </svg>
        </div>
      </div>

      <div className="flex flex-1 items-center pb-px pl-1 text-[15.5px]">
        <div className="flex h-[29px] w-[327px] shrink-0 items-center rounded-[3px] border border-[#a9a5a1] bg-white pl-2 text-[17.6px] text-[#868686]">
          <svg width="13" height="13" viewBox="0 0 13 13" fill="none" stroke="#8a8a8a" strokeWidth="1.300"><circle cx="5" cy="5" r="4" /><path d="M8 8l4.500 4.500" /></svg>
          <Label text="Type to locate (Ctrl+K)" w={182} className="ml-[7px]" />
        </div>
        <Clipped text="Coordinate" w={77} className="ml-[68px] w-[67px] pt-[2px]" />
        <div className="ml-[3px] flex h-[26px] w-[104px] shrink-0 items-center rounded-[3px] border border-[#a9a5a1] bg-white pl-1 pt-[2px]"><Label text="-8.081,54.369" w={92} /></div>
        <svg width="20" height="22" viewBox="0 0 20 22" className="ml-[4px] shrink-0">
          <path d="M1 10l4-1M2 16l4-2M12 3l2-2M16 6l3-1M16 10l3 1" stroke="#222" strokeDasharray="2 1.500" />
          <ellipse cx="7" cy="6" rx="4.300" ry="5" fill="#1a1a1a" transform="rotate(-20 7 6)" />
          <path d="M5 3l3 5M8 2l1.500 5" stroke="#fff" strokeWidth="1.200" />
          <path d="M6 11l6-2 5 5q2 5-2 6.500T8 17z" fill="#e8e8e8" stroke="#1a1a1a" strokeWidth="1.800" />
          <circle cx="12.500" cy="15.500" r="1.800" fill="none" stroke="#1a1a1a" strokeWidth="1.200" />
          <path d="M14 10l4-5" stroke="#1a1a1a" strokeWidth="1.500" />
        </svg>
        <Clipped text="Scale" w={36} className="ml-[13px] w-[28px] pt-[2px]" />
        <div className="ml-[2px] flex h-[29px] w-[116px] shrink-0 rounded-[3px] border border-[#a9a5a1] bg-white">
          <span className="flex flex-1 items-center pl-1 pt-[2px]"><Label text="1:509520" w={62} /></span>
          <span className="flex w-5 items-center justify-center rounded-r-[3px] border-l border-[#b9b5b1] bg-gradient-to-b from-[#faf9f8] to-[#eceae8]"><Tri dir="d" /></span>
        </div>
        <svg width="16" height="20" viewBox="0 0 16 20" className="ml-[12px] shrink-0">
          <path d="M3.500 10V6Q3.500 1.500 8 1.500T12.500 6v4" fill="none" stroke="#8d8a88" strokeWidth="2" />
          <rect x=".5" y="8.500" width="15" height="11" rx="1.500" fill="#5d5b59" />
        </svg>
        <Clipped text="Magnifier" w={69} className="ml-[9px] w-[57px] pt-[3px]" />
        <Spin text="100%" w={37} className="ml-[3px] h-[28px] w-[106px]" />
        <Clipped text="Rotation" w={61} className="ml-[9px] w-[51px] pt-[3px]" />
        <Spin text="0.0 °" w={29} className="ml-[9px] h-[27px] w-[103px]" />
        <span className="ml-[5px] flex"><Check /></span>
        <Label text="Render" w={49} className="ml-[6px] mt-[3px]" />
        <svg width="20" height="18" viewBox="0 0 20 18" fill="none" stroke="#6c6a68" className="ml-[18px] shrink-0">
          <ellipse cx="10" cy="9" rx="7.500" ry="7.800" fill="#c9c6c3" /><path d="M0 9h20M3.500 5h13M3.500 13h13M10 1v16M10 1Q2 9 10 17M10 1Q18 9 10 17" strokeWidth="1.300" />
        </svg>
        <Label text="EPSG:4326" w={73} className="ml-[4px] mt-[3px]" />
        <svg width="21" height="20" viewBox="0 0 21 20" className="ml-[20px] shrink-0">
          <path d="M10 1.500q9 0 9.500 7.500 0 4.500-3 6.300l2 4q-4-.500-6-3.500Q.500 17 .500 9 1 1.500 10 1.500z" fill="#5d5b59" />
          <g fill="#fff"><circle cx="5.500" cy="8.500" r="1.400" /><circle cx="10" cy="8.500" r="1.400" /><circle cx="14.500" cy="8.500" r="1.400" /></g>
        </svg>
        <svg width="12" height="12" viewBox="0 0 12 12" fill="#b5b1ad" className="ml-[17px] mt-[20px] shrink-0">
          <path d="M9 0h1v1H9zM6 3h1v1H6zM9 3h1v1H9zM3 6h1v1H3zM6 6h1v1H6zM9 6h1v1H9zM0 9h1v1H0zM3 9h1v1H3zM6 9h1v1H6zM9 9h1v1H9z" />
        </svg>
      </div>

      {/* layer context menu */}
      <div className="absolute left-[232px] top-[168px] w-[319px] bg-white shadow-[0_1px_3px_rgba(0,0,0,0.25)]">
        <div className="pointer-events-none absolute inset-0 border border-[#8f8f8f]" />
        <div className="relative">
          {contextMenu.map((it, i) =>
            it ? <MenuRow key={i} item={it} /> : <div key={i} className="mx-[5px] h-[2px] border-t border-[#c0c0c0]" />
          )}
        </div>
      </div>

      {/* export submenu */}
      <div className="absolute left-[550px] top-[553px] w-[310px] bg-white shadow-[0_1px_3px_rgba(0,0,0,0.25)]">
        <div className="pointer-events-none absolute inset-0 border border-[#8f8f8f]" />
        <div className="relative">
          {subMenu.map((it) => <MenuRow key={it.t} item={it} />)}
        </div>
      </div>

      <svg width="14" height="21" viewBox="0 0 14 21" className="absolute left-[791px] top-[568px]">
        <path d="M1.500 1v15.500l3.600-3.300L7.700 19l2.600-1.200-2.500-5.600h4.700z" fill="#fff" stroke="#000" strokeWidth="1.200" />
      </svg>
    </div>
  );
}
